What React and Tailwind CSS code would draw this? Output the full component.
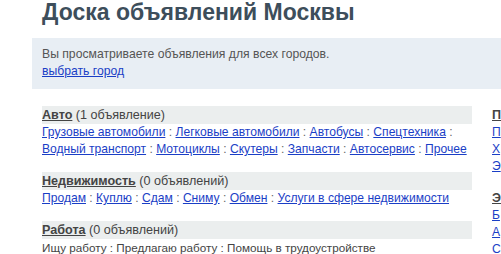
const sections = [
  {
    title: "Авто",
    count: "1 объявление",
    links: ["Грузовые автомобили", "Легковые автомобили", "Автобусы", "Спецтехника", "Водный транспорт", "Мотоциклы", "Скутеры", "Запчасти", "Автосервис", "Прочее"],
  },
  {
    title: "Недвижимость",
    count: "0 объявлений",
    links: ["Продам", "Куплю", "Сдам", "Сниму", "Обмен", "Услуги в сфере недвижимости"],
  },
  {
    title: "Работа",
    count: "0 объявлений",
    plain: true,
    links: ["Ищу работу", "Предлагаю работу", "Помощь в трудоустройстве"],
  },
];

const right = [
  { title: "П", links: ["П", "Х", "Э"] },
  { title: "Э", links: ["Б", "А", "С"] },
];

const Section = ({ s }) => (
  <div className="mb-[14px]">
    <div className="bg-[#ebeeee] h-[18px] leading-[18px] text-[#444] text-[12.6px]">
      <a href="#" className="font-bold underline text-[#444]">{s.title}</a> ({s.count})
    </div>
    <div className={s.plain ? "leading-[17px] text-[#444] text-[11.7px]" : "leading-[17px] text-[#666]"}>
      {s.links.map((l, i) => (
        <span key={l}>
          {s.plain ? (
            <span>{l}</span>
          ) : (
            <a href="#" className="text-[#1a3ec6] underline">{l}</a>
          )}
          {i < s.links.length - 1 ? " : " : ""}
        </span>
      ))}
    </div>
  </div>
);

export default function App() {
  return (
    <div className="w-[501px] h-[254px] overflow-hidden bg-white font-['Liberation_Sans',Arial,sans-serif] text-[12.1px]">
      <h1 className="pl-[42px] h-[38px] text-[23px] font-bold leading-[24px] text-[#3d4e5b] whitespace-nowrap">
        Доска объявлений Москвы
      </h1>
      <div className="ml-[32px] bg-[#e8eef4] pl-[10px] pt-[8px] h-[51px] leading-[17px] text-[#555] text-[12.2px]">
        <div>Вы просматриваете объявления для всех городов.</div>
        <a href="#" className="text-[#1a3ec6] underline">выбрать город</a>
      </div>
      <div className="flex pl-[42px] pt-[17px] gap-[20px] whitespace-nowrap">
        <div className="w-[430px] shrink-0 whitespace-normal">
          {sections.map((s) => (
            <Section key={s.title} s={s} />
          ))}
        </div>
        <div className="shrink-0">
          {right.map((r) => (
            <div key={r.title} className="mb-[14px]">
              <div className="h-[18px] leading-[18px] text-[12.6px]">
                <a href="#" className="font-bold underline text-[#444]">{r.title}</a>
              </div>
              <div className="leading-[17px]">
                {r.links.map((l) => (
                  <div key={l}>
                    <a href="#" className="text-[#1a3ec6] underline">{l}</a>
                  </div>
                ))}
              </div>
            </div>
          ))}
        </div>
      </div>
    </div>
  );
}
